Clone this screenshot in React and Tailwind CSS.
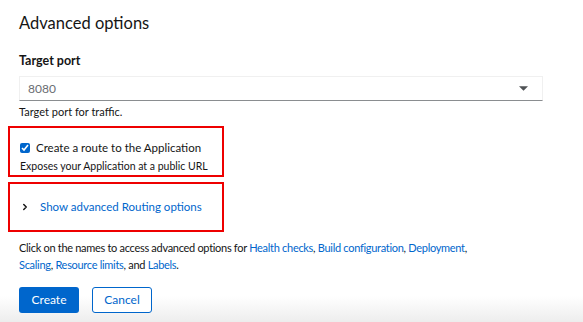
import { ChevronRight } from 'lucide-react';

export default function App() {
  const font = { fontFamily: 'Lato, "Noto Sans", sans-serif' };
  return (
    <div className="w-[583px] h-[322px] bg-white text-[#151515] overflow-hidden relative" style={font}>
      <div className="pl-[19px] pr-[40px]">
        <h2 className="text-[16.5px] leading-[22px] pt-[12px] font-normal">Advanced options</h2>

        <div className="mt-[19px] text-[12.5px] leading-[16px] font-bold">Target port</div>
        <div className="mt-[7px] h-[25px] flex items-center justify-between px-[8px] bg-white border border-[#f0f0f0] border-b-[#8a8d90]">
          <span className="text-[12px] text-[#6a6e73]">8080</span>
          <svg width="9" height="5" viewBox="0 0 10 5" className="mr-[6px]">
            <path d="M0 0 L10 0 L5 5 Z" fill="#4f5255" />
          </svg>
        </div>
        <div className="mt-[4px] text-[11px] leading-[14px]">Target port for traffic.</div>
      </div>

      <div className="ml-[8px] mt-[7px] w-[216px] h-[51px] border-2 border-[#ee0000] pl-[10px] pt-[12px]">
        <label className="flex items-center gap-[6px] text-[11.5px] leading-[16px] whitespace-nowrap">
          <input type="checkbox" defaultChecked className="w-[10px] h-[10px] accent-[#0066cc] m-0" />
          <span>Create a route to the Application</span>
        </label>
        <div className="mt-[3px] text-[10.5px] leading-[14px] whitespace-nowrap">Exposes your Application at a public URL</div>
      </div>

      <div className="ml-[8px] mt-[5px] w-[216px] h-[50px] border-2 border-[#ee0000] flex items-center pl-[10px] gap-[10px]">
        <ChevronRight size={10} strokeWidth={3.5} className="text-[#151515]" />
        <span className="text-[11.5px] text-[#0066cc]">Show advanced Routing options</span>
      </div>

      <div className="pl-[19px] pr-[20px] mt-[7px] text-[11px] leading-[17px] tracking-[-0.3px]">
        Click on the names to access advanced options for{' '}
        <span className="text-[#0066cc]">Health checks</span>,{' '}
        <span className="text-[#0066cc]">Build configuration</span>,{' '}
        <span className="text-[#0066cc]">Deployment</span>,<br />
        <span className="text-[#0066cc]">Scaling</span>,{' '}
        <span className="text-[#0066cc]">Resource limits</span>, and{' '}
        <span className="text-[#0066cc]">Labels</span>.
      </div>

      <div className="absolute left-0 right-0 bottom-0 h-[26px] bg-gradient-to-b from-white to-[#ededed]" />
      <div className="relative mt-[14px] pl-[19px] flex gap-[13px]">
        <button className="w-[60px] h-[26px] rounded-[3px] bg-[#0066cc] text-white text-[12px]">Create</button>
        <button className="w-[60px] h-[26px] rounded-[3px] bg-white border border-[#0066cc] text-[#0066cc] text-[12px]">Cancel</button>
      </div>
    </div>
  );
}
